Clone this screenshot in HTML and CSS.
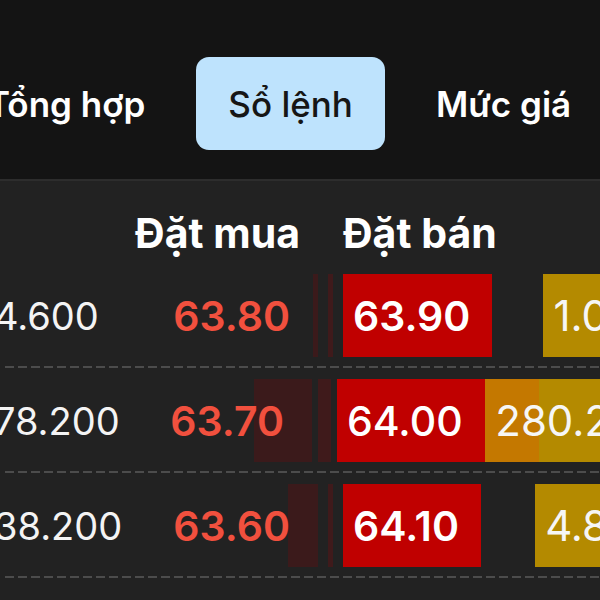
FILE: index.html
```html
<!DOCTYPE html>
<html lang="vi">
<head>
<meta charset="UTF-8">
<meta name="viewport" content="width=device-width, initial-scale=1.0">
<title>Sổ lệnh</title>
<link rel="stylesheet" href="styles.css">
</head>
<body>

<header class="tabs-bar">
    <nav class="tabs">
        <span class="tab">Tổng hợp</span>
        <span class="tab active">Sổ lệnh</span>
        <span class="tab">Mức giá</span>
    </nav>
</header>

<section class="book">
    <div class="book-head">
        <div class="c-vol"></div>
        <div class="c-bid">Đặt mua</div>
        <div class="c-mid"></div>
        <div class="c-ask">Đặt bán</div>
        <div class="c-askvol"></div>
    </div>

    <div class="book-row">
        <div class="c-vol">4.600</div>
        <div class="c-bid"><span class="bid-bar" style="width:5px"></span><span class="bid-price">63.80</span></div>
        <div class="c-mid"><span class="mid-bar" style="width:5px"></span></div>
        <div class="c-ask"><span class="ask-box">63.90</span></div>
        <div class="c-askvol"><span class="askvol-box">1.000</span></div>
    </div>

    <div class="book-row is-updating">
        <div class="c-vol">78.200</div>
        <div class="c-bid"><span class="bid-bar" style="width:58px"></span><span class="bid-price">63.70</span></div>
        <div class="c-mid"><span class="mid-bar" style="width:13px"></span></div>
        <div class="c-ask"><span class="ask-box">64.00</span></div>
        <div class="c-askvol"><span class="askvol-box" style="--hot:54px">280.200</span></div>
    </div>

    <div class="book-row">
        <div class="c-vol">38.200</div>
        <div class="c-bid"><span class="bid-bar" style="width:30px"></span><span class="bid-price">63.60</span></div>
        <div class="c-mid"><span class="mid-bar" style="width:5px"></span></div>
        <div class="c-ask"><span class="ask-box">64.10</span></div>
        <div class="c-askvol"><span class="askvol-box">4.800</span></div>
    </div>
</section>

</body>
</html>
```

FILE: styles.css
```css
body {
    font-family: Inter, 'Noto Sans', sans-serif;
    margin: 0;
    padding: 0;
    width: 600px;
    height: 600px;
    overflow: hidden;
    background-color: #222222;
    color: #ffffff;
}

/* タブ */
.tabs-bar {
    background-color: #141414;
    height: 181px;
    border-bottom: 2px solid #2d2d2d;
    padding-top: 57px;
    box-sizing: border-box;
}

.tabs {
    display: flex;
    gap: 19px;
    margin-left: -45px;
}

.tab {
    height: 93px;
    padding: 0 32px;
    display: flex;
    align-items: center;
    font-size: 35px;
    font-weight: 600;
    border-radius: 13px;
    white-space: nowrap;
}

.tab.active {
    background-color: #bee3fd;
    color: #161616;
    font-weight: 500;
}

/* 板 */
.book {
    margin-left: -6px;
    width: 740px;
}

.book-head,
.book-row {
    display: grid;
    grid-template-columns: 136px 190px 20px 150px 191px;
}

.book-head {
    height: 82px;
    padding-top: 28px;
    box-sizing: border-box;
    font-size: 41px;
    font-weight: 700;
    line-height: 48px;
    white-space: nowrap;
}

.book-head .c-bid {
    text-align: right;
    padding-right: 20px;
}

.book-head .c-ask {
    padding-left: 3px;
}

.book-row {
    height: 105px;
    padding: 11px 0;
    box-sizing: border-box;
    background: repeating-linear-gradient(90deg, #4c4c4c 0 9px, transparent 9px 13px) 11px bottom / 100% 2px no-repeat;
}

.book-row.is-updating {
    grid-template-columns: 136px 184px 20px 150px 199px;
}

.book-row > div {
    display: flex;
    align-items: center;
    white-space: nowrap;
}

.book-row .c-vol {
    font-size: 38px;
    color: #f4f4f4;
}

.book-row .c-bid {
    position: relative;
    justify-content: flex-end;
    padding-right: 30px;
}

.bid-bar {
    position: absolute;
    top: 0;
    bottom: 0;
    right: 2px;
    background-color: #3b1a1b;
}

.bid-price {
    position: relative;
    font-size: 41px;
    font-weight: 600;
    color: #f1503e;
}

.book-row .c-mid {
    justify-content: center;
    align-items: stretch;
}

.mid-bar {
    background-color: #3f1a1b;
}

.book-row .c-ask {
    padding-left: 3px;
    align-items: stretch;
}

.ask-box {
    display: flex;
    align-items: center;
    padding: 0 22px 0 10px;
    background-color: #c00000;
    font-size: 41px;
    font-weight: 600;
}

.is-updating .ask-box {
    font-weight: 500;
}

.book-row .c-askvol {
    justify-content: flex-end;
    align-items: stretch;
}

.askvol-box {
    --hot: 0px;
    display: flex;
    align-items: center;
    padding: 0 20px 0 10px;
    background: linear-gradient(90deg, #c47800 var(--hot), #b48a00 var(--hot));
    font-size: 42px;
    color: #f6f6f6;
}
```
